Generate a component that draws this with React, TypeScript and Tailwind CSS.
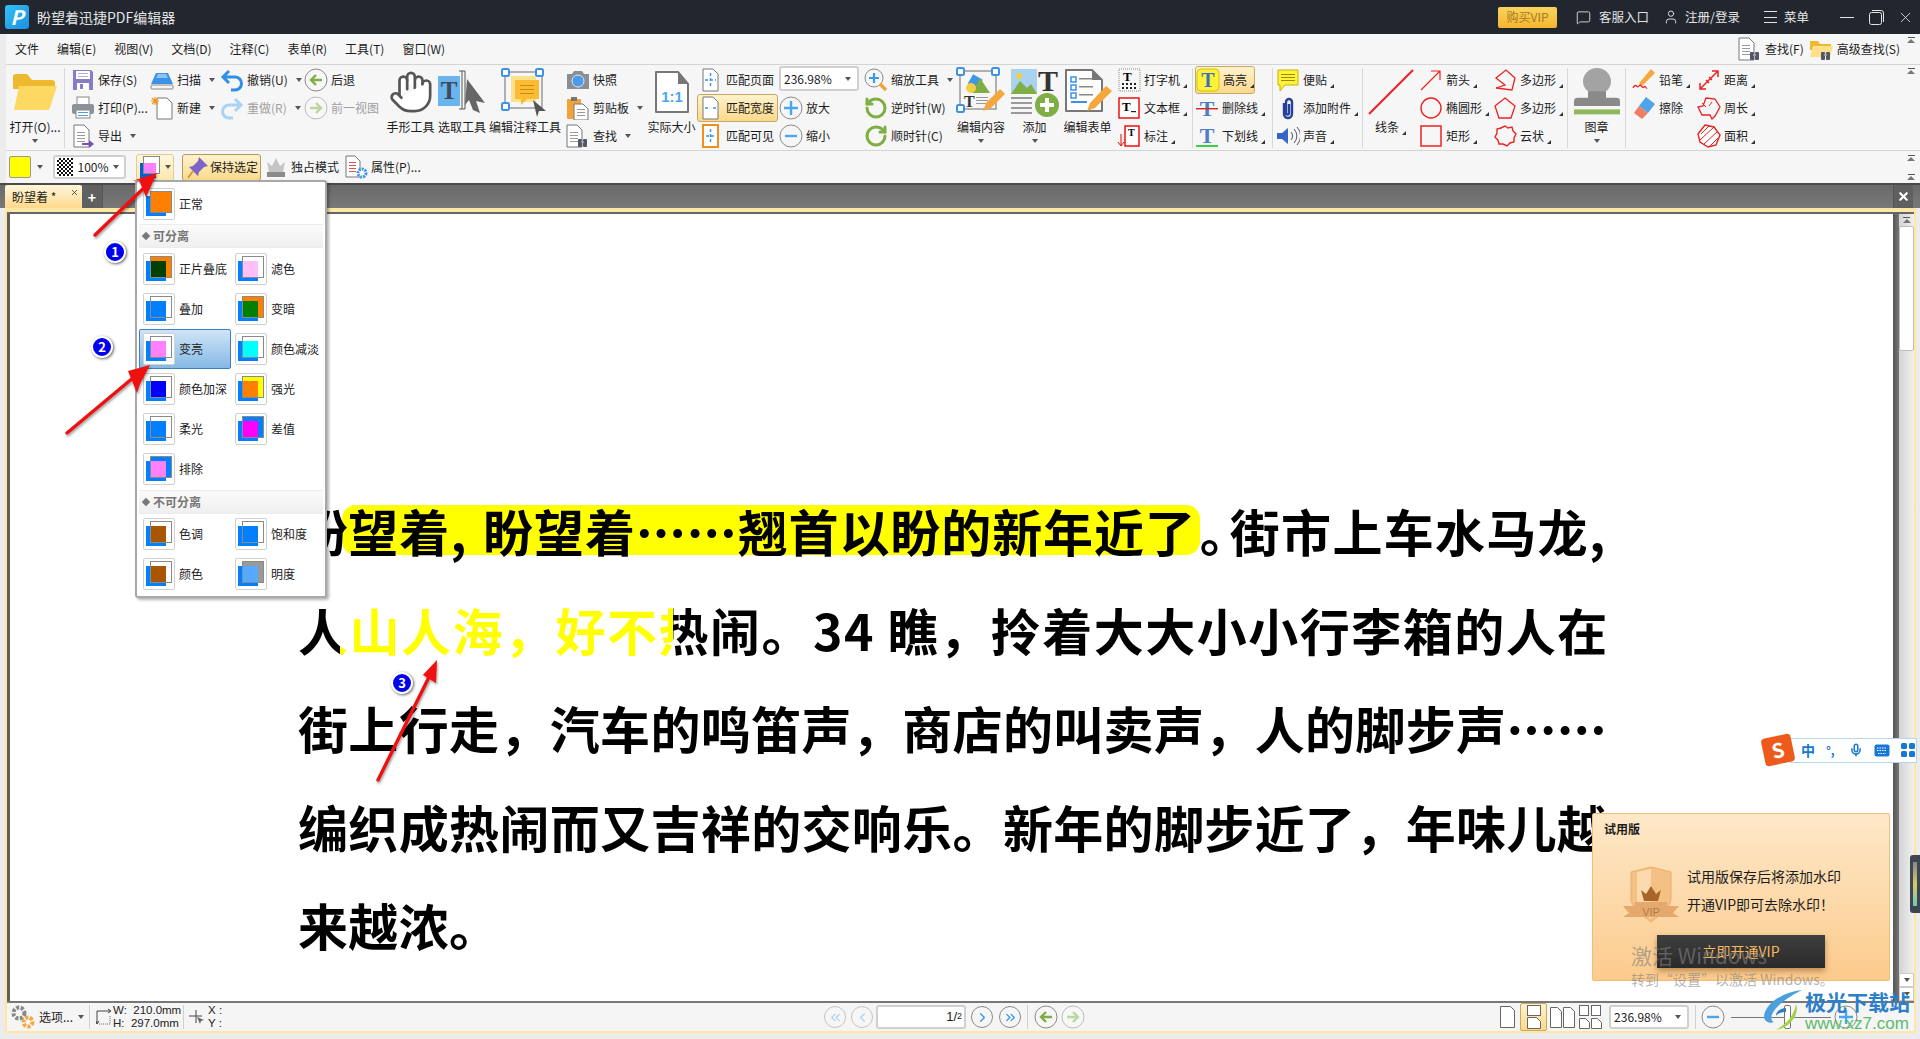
import React from "react";
import clsx from "clsx";
import {
  ChevronLeft,
  ChevronRight,
  ChevronsLeft,
  ChevronsRight,
  Hand,
  MessageSquare,
  Mic,
  RotateCcw,
  RotateCw,
  User,
  X,
} from "lucide-react";

const S = ({ s = 24, v = 24, children }: { s?: number; v?: number; children: React.ReactNode }) => (
  <svg width={s} height={s} viewBox={`0 0 ${v} ${v}`}>
    {children}
  </svg>
);

const Doc = ({ x = 5, y = 2, w = 14, h = 20, stroke = "#777", fill = "#fff" }) => (
  <path
    d={`M${x} ${y}h${w - 5}l5 5v${h - 5}h-${w}z`}
    fill={fill}
    stroke={stroke}
    strokeWidth="1"
    strokeLinejoin="round"
  />
);

const Binoculars = ({ x = 13, y = 15 }) => (
  <g fill="#556">
    <rect x={x} y={y} width="4" height="8" rx="1" />
    <rect x={x + 5} y={y} width="4" height="8" rx="1" />
    <rect x={x + 3} y={y + 2} width="3" height="2" fill="#8fa0b0" />
  </g>
);

const lines = (x: number, y: number, w: number, n: number, c = "#999", step = 3) =>
  Array.from({ length: n }).map((_, i) => (
    <rect key={i} x={x} y={y + i * step} width={w} height="1" fill={c} />
  ));

const Ic = {
  save: (
    <S>
      <path d="M2 2h18l2 2v18H2z" fill="#8a7cc4" />
      <rect x="5" y="3" width="14" height="8" fill="#fff" />
      {lines(7, 5, 10, 2, "#b5abdc")}
      <rect x="6" y="15" width="12" height="7" fill="#fff" />
      <rect x="9" y="16" width="3" height="5" fill="#8a7cc4" />
    </S>
  ),
  print: (
    <S>
      <rect x="6" y="1" width="12" height="8" fill="#fff" stroke="#888" />
      <rect x="1" y="8" width="22" height="10" rx="2" fill="#8c9299" />
      <rect x="5" y="14" width="14" height="8" fill="#fff" stroke="#888" />
      {lines(7, 16, 10, 2, "#5b9bd5")}
    </S>
  ),
  exportDoc: (
    <S>
      <Doc x={3} y={1} w={15} h={22} />
      {lines(6, 8, 8, 4)}
      <path d="M11 19h7v-3l5 4-5 4v-3h-7z" fill="#7a4fb5" />
    </S>
  ),
  scan: (
    <S>
      <path d="M6 5h12l5 11H1z" fill="#3a93e6" />
      <path d="M8 6h8l2 4H6z" fill="#8cc4f4" />
      <rect x="1" y="17" width="22" height="4" rx="1" fill="#f4f4f4" stroke="#888" />
    </S>
  ),
  create: (
    <S>
      <Doc x={7} y={2} w={15} h={21} />
      <path
        d="M5 1v8M1 5h8M2 2l6 6M8 2L2 8"
        stroke="#f39a1e"
        strokeWidth="1.2"
      />
    </S>
  ),
  undo: (
    <S>
      <path d="M9 3L3 9l6 6M3 9h12a6 6 0 0 1 0 13h-4" fill="none" stroke="#2f8fe6" strokeWidth="3" />
    </S>
  ),
  redo: (
    <S>
      <path d="M15 3l6 6-6 6M21 9H9a6 6 0 0 0 0 13h4" fill="none" stroke="#a9d3f5" strokeWidth="3" />
    </S>
  ),
  back: (
    <S>
      <circle cx="12" cy="12" r="11" fill="#f7f7f7" stroke="#8a8a8a" />
      <path d="M18 12H7M12 7l-5 5 5 5" fill="none" stroke="#7fae45" strokeWidth="2.4" />
    </S>
  ),
  forward: (
    <S>
      <circle cx="12" cy="12" r="11" fill="#f7f7f7" stroke="#bcbcbc" />
      <path d="M6 12h11M12 7l5 5-5 5" fill="none" stroke="#bcd6a0" strokeWidth="2.4" />
    </S>
  ),
  snapshot: (
    <S>
      <path d="M1 6h5l2-3h8l2 3h5v15H1z" fill="#8b8f94" />
      <circle cx="12" cy="13" r="6" fill="#4c9be8" stroke="#dfe6ee" />
    </S>
  ),
  clipboard: (
    <S>
      <rect x="1" y="3" width="14" height="20" rx="1" fill="#f2a33a" />
      <rect x="5" y="1" width="6" height="4" fill="#777" />
      <Doc x={8} y={8} w={14} h={16} />
      {lines(11, 13, 8, 3)}
    </S>
  ),
  find: (
    <S>
      <Doc x={1} y={1} w={15} h={22} />
      {lines(4, 8, 8, 4)}
      <Binoculars x={12} y={15} />
    </S>
  ),
  findFolder: (
    <S>
      <path d="M0 4h8l2 3h11v6H0z" fill="#eeb92f" />
      <path d="M0 20l3-11h20l-3 11z" fill="#fde18a" />
      <Binoculars x={11} y={15} />
    </S>
  ),
  fitPage: (
    <S>
      <Doc x={4} y={1} w={15} h={22} />
      <path d="M11.5 5v14M6 12h11" stroke="#3a93e6" strokeDasharray="3 2" strokeWidth="1.5" />
    </S>
  ),
  fitWidth: (
    <S>
      <Doc x={4} y={1} w={15} h={22} />
      <path d="M6 12h3M14 12h3" stroke="#3a93e6" strokeWidth="1.5" />
    </S>
  ),
  fitVisible: (
    <S>
      <rect x="4" y="1" width="15" height="22" fill="#fff" stroke="#ef8f1c" strokeWidth="2" />
      <path d="M11.5 5v14M7 12h9" stroke="#3a93e6" strokeDasharray="3 2" strokeWidth="1.5" />
    </S>
  ),
  plus: (
    <S>
      <circle cx="12" cy="12" r="11" fill="#f6f6f6" stroke="#8a8a8a" />
      <path d="M12 5v14M5 12h14" stroke="#4aa6ee" strokeWidth="2.4" />
    </S>
  ),
  minus: (
    <S>
      <circle cx="12" cy="12" r="11" fill="#f6f6f6" stroke="#8a8a8a" />
      <path d="M6 12h12" stroke="#4aa6ee" strokeWidth="2.4" />
    </S>
  ),
  zoom: (
    <S>
      <circle cx="10" cy="10" r="9" fill="#f6f6f6" stroke="#8a8a8a" />
      <path d="M10 5v10M5 10h10" stroke="#3a9bea" strokeWidth="2.2" />
      <path d="M16 16l6 6" stroke="#f2a33a" strokeWidth="3.4" />
    </S>
  ),
  typewriter: (
    <S>
      <rect x="2" y="1" width="21" height="22" fill="none" stroke="#888" strokeDasharray="1 1" />
      <text x="6" y="13" fontSize="13" fontWeight="700" fontFamily="Liberation Serif">
        T
      </text>
      <g fill="#222">
        {[5, 9, 13, 17].map((x) => (
          <React.Fragment key={x}>
            <rect x={x} y="15" width="2" height="2" />
            <rect x={x} y="19" width="2" height="2" />
          </React.Fragment>
        ))}
      </g>
    </S>
  ),
  textbox: (
    <S>
      <rect x="2" y="2" width="20" height="20" fill="#fff" stroke="#e00" strokeWidth="1.4" />
      <text x="5" y="15" fontSize="13" fontWeight="700" fontFamily="Liberation Serif">
        T
      </text>
      <rect x="14" y="15" width="5" height="1.2" fill="#222" />
    </S>
  ),
  callout: (
    <S>
      <rect x="8" y="2" width="14" height="20" fill="#fff" stroke="#e00" strokeWidth="1.4" />
      <text x="11" y="12" fontSize="10" fontWeight="700" fontFamily="Liberation Serif">
        T
      </text>
      <path d="M4 10v11M1 18l3 4 3-4" fill="none" stroke="#e00" />
    </S>
  ),
  highlight: (
    <S>
      <rect x="1" y="1" width="22" height="22" rx="4" fill="#fff23a" stroke="#d6c200" />
      <text x="12" y="19" textAnchor="middle" fontSize="20" fontWeight="700" fill="#3d6fc0" fontFamily="Liberation Serif">
        T
      </text>
    </S>
  ),
  strike: (
    <S>
      <text x="12" y="20" textAnchor="middle" fontSize="22" fontWeight="700" fill="#4f7ec4" fontFamily="Liberation Serif">
        T
      </text>
      <rect x="1" y="12" width="22" height="1.4" fill="#d22" />
    </S>
  ),
  underline: (
    <S>
      <text x="12" y="19" textAnchor="middle" fontSize="22" fontWeight="700" fill="#4f7ec4" fontFamily="Liberation Serif">
        T
      </text>
      <rect x="1" y="21" width="22" height="2" fill="#3ecf3e" />
    </S>
  ),
  note: (
    <S>
      <path d="M2 2h20v15H9l-5 6v-6H2z" fill="#fff23a" stroke="#c5b400" />
      {lines(5, 6, 14, 3, "#9a8a00")}
    </S>
  ),
  clip: (
    <S>
      <path
        d="M8 7v11a4 4 0 0 0 8 0V6a3 3 0 0 0-6 0v11a1.5 1.5 0 0 0 3 0V8"
        fill="none"
        stroke="#27409a"
        strokeWidth="2.4"
      />
    </S>
  ),
  sound: (
    <S>
      <path d="M1 9h5l6-5v16l-6-5H1z" fill="#3565c5" />
      <path d="M15 8a6 6 0 0 1 0 8M18 5a10 10 0 0 1 0 14M21 3a13 13 0 0 1 0 18" fill="none" stroke="#556" />
    </S>
  ),
  arrow: (
    <S>
      <path d="M2 22L21 3M12 3h9v9" fill="none" stroke="#ee2222" strokeWidth="1.2" />
    </S>
  ),
  ellipse: (
    <S>
      <circle cx="12" cy="12" r="10" fill="none" stroke="#ee2222" strokeWidth="1.4" />
    </S>
  ),
  rect: (
    <S>
      <rect x="2" y="2" width="20" height="20" fill="none" stroke="#ee2222" strokeWidth="1.5" />
    </S>
  ),
  polyline: (
    <S>
      <path d="M3 10L13 2l9 8-3 12-16-2 9-3z" fill="none" stroke="#ee2222" strokeWidth="1.3" />
    </S>
  ),
  polygon: (
    <S>
      <path d="M12 2l10 8-4 12H6L2 10z" fill="none" stroke="#ee2222" strokeWidth="1.3" />
    </S>
  ),
  cloud: (
    <S>
      <path
        d="M12 2l3 2 4-1 1 4 3 3-2 4 0 4-4 1-3 3-4-2-4 0-1-4-3-3 2-4 0-4 4-1z"
        fill="none"
        stroke="#ee2222"
        strokeWidth="1.4"
      />
    </S>
  ),
  pencil: (
    <S>
      <path d="M8 14L19 1l4 4-12 12-4 1z" fill="#f4a73c" />
      <path d="M1 20c3-6 4 1 6-2s3 3 5 1 2 2 3 1" fill="none" stroke="#ee2222" strokeWidth="1.3" />
    </S>
  ),
  eraser: (
    <S>
      <path d="M14 1l9 7-7 9-9-7z" fill="#4ea3ea" />
      <path d="M7 10l9 7-6 6-8-6z" fill="#ef7f62" />
    </S>
  ),
  distance: (
    <S>
      <path d="M3 21L21 3M15 3h6v6M3 15v6h6M9 12l3 3M12 9l3 3" fill="none" stroke="#e92222" strokeWidth="1.5" />
    </S>
  ),
  perimeter: (
    <S>
      <path d="M9 2l9 1 5 8-5 9-3 3-2-4H5L1 11l5-1z" fill="none" stroke="#e92222" strokeWidth="1.3" />
      <path d="M5 7l4 4M15 6l-3 4" stroke="#e92222" />
    </S>
  ),
  area: (
    <S>
      <path d="M8 1l9 2 6 8-4 10-8 2-8-5-2-8z" fill="#fff" stroke="#e92222" strokeWidth="1.4" />
      <path d="M4 10l8-8M3 16L17 3M7 20L21 7M13 22l8-8" stroke="#e92222" />
    </S>
  ),
  pin: (
    <S>
      <path d="M13 2l9 9-4 1-5 5-1 4-9-9 4-1 5-5z" fill="#7e63c8" />
      <path d="M7 16l-5 7" stroke="#d49a3a" strokeWidth="2" />
    </S>
  ),
  crown: (
    <S>
      <path d="M3 7l5 4 4-8 4 8 5-4-2 10H5z" fill="#c5c5c5" />
      <rect x="3" y="17" width="18" height="5" fill="#8a8a8a" />
    </S>
  ),
  props: (
    <S>
      <Doc x={2} y={1} w={14} h={21} />
      {lines(5, 7, 7, 4, "#d9534f")}
      <circle cx="18" cy="18" r="4" fill="#fff" stroke="#3a93e6" strokeWidth="3" strokeDasharray="2 1" />
    </S>
  ),
};

const Folder = () => (
  <svg width="48" height="38" viewBox="0 0 48 38">
    <path d="M2 4a3 3 0 0 1 3-3h11l5 6h20a3 3 0 0 1 3 3v6H2v20z" fill="#eeb92f" />
    <path d="M8 13h38l-7 22a3 3 0 0 1-3 2H3z" fill="#fdd963" />
  </svg>
);

const HandTool = () => <Hand size={46} strokeWidth={1.4} color="#555" fill="#fff" />;

const SelectTool = () => (
  <svg width="50" height="50" viewBox="0 0 50 50">
    <rect x="1" y="9" width="22" height="30" fill="#6ab4f0" />
    <text x="12" y="32" textAnchor="middle" fontSize="25" fontWeight="700" fill="#3f4a57" fontFamily="Liberation Serif">
      T
    </text>
    <path d="M22 4h6v38h-6M25 4v38" fill="none" stroke="#555" />
    <path d="M30 12l18 24-9-2 4 12-7-3-4-10-4 5z" fill="#666" />
  </svg>
);

const AnnotTool = () => (
  <svg width="50" height="50" viewBox="0 0 50 50">
    <rect x="5" y="5" width="37" height="36" fill="none" stroke="#999" strokeWidth="1.5" />
    {[[2, 2], [36, 2], [2, 36]].map(([x, y]) => (
      <rect key={x + "" + y} x={x} y={y} width="7" height="7" rx="1.5" fill="#fff" stroke="#3a93e6" strokeWidth="2" />
    ))}
    <rect x="11" y="9" width="25" height="26" fill="#fbe08d" />
    <path d="M15 13h24v19H27l-6 6v-6h-6z" fill="#fbbc33" />
    {lines(20, 18, 14, 3, "#c98c13", 4)}
    <path d="M33 33l13 11-7 0-2 6z" fill="#555" />
  </svg>
);

const ActualSize = () => (
  <svg width="36" height="44" viewBox="0 0 36 44">
    <path d="M2 2h22l10 12v28H2z" fill="#fff" stroke="#777" strokeWidth="2" strokeLinejoin="round" />
    <path d="M24 2l10 12H24z" fill="#777" />
    <text x="18" y="32" textAnchor="middle" fontSize="15" fontWeight="700" fill="#4aa6ee" fontFamily="Liberation Sans">
      1:1
    </text>
  </svg>
);

const EditContent = () => (
  <svg width="50" height="50" viewBox="0 0 50 50">
    <rect x="4" y="4" width="36" height="38" fill="none" stroke="#999" strokeWidth="1.5" />
    {[[1, 1], [36, 1], [1, 38]].map(([x, y]) => (
      <rect key={x + "" + y} x={x} y={y} width="7" height="7" rx="1.5" fill="#fff" stroke="#3a93e6" strokeWidth="2" />
    ))}
    <rect x="14" y="9" width="11" height="11" fill="#3d96e8" transform="rotate(30 19 14)" />
    <path d="M24 11l10 15H16z" fill="#7fae45" />
    <circle cx="15" cy="21" r="5" fill="#f5ce45" />
    <text x="8" y="40" fontSize="16" fontWeight="700" fill="#333" fontFamily="Liberation Serif">
      T
    </text>
    {lines(20, 30, 12, 3, "#999")}
    <path d="M27 44l3-8 14-14 5 5-14 14z" fill="#f4a73c" />
  </svg>
);

const AddTool = () => (
  <svg width="50" height="50" viewBox="0 0 50 50">
    <rect x="1" y="2" width="26" height="25" fill="#a9d2ee" />
    <path d="M1 27l9-13 7 7 4-4 6 10H1z" fill="#7fae45" />
    <circle cx="9" cy="9" r="3" fill="#f5ce45" />
    <text x="38" y="24" textAnchor="middle" fontSize="30" fontWeight="700" fill="#333" fontFamily="Liberation Serif">
      T
    </text>
    {[30, 35, 40, 45].map((y) => (
      <rect key={y} x="1" y={y} width="21" height="2" fill="#999" />
    ))}
    <circle cx="37" cy="38" r="12" fill="#7fae45" />
    <path d="M37 31v14M30 38h14" stroke="#fff" strokeWidth="4" />
  </svg>
);

const EditForm = () => (
  <svg width="50" height="50" viewBox="0 0 50 50">
    <path d="M3 3h26l10 10v31H3z" fill="#fff" stroke="#777" strokeWidth="2" strokeLinejoin="round" />
    <path d="M29 3l10 10H29z" fill="#777" />
    {[10, 18, 26].map((y) => (
      <React.Fragment key={y}>
        <rect x="8" y={y} width="5" height="5" fill="none" stroke="#3a93e6" strokeWidth="1.5" />
        <rect x="16" y={y + 1} width="14" height="1.5" fill="#888" />
      </React.Fragment>
    ))}
    <rect x="8" y="34" width="16" height="2" fill="#3a93e6" />
    <path d="M24 44l3-8 16-17 6 5-17 17z" fill="#f4a73c" />
  </svg>
);

const LineTool = () => (
  <svg width="46" height="46" viewBox="0 0 46 46">
    <path d="M1 45L45 1" stroke="#ee2020" strokeWidth="2" />
  </svg>
);

const Stamp = () => (
  <svg width="46" height="48" viewBox="0 0 46 58" preserveAspectRatio="none">
    <ellipse cx="23" cy="16" rx="14" ry="16" fill="#a3a3a3" />
    <path d="M14 28h18v8h10a4 4 0 0 1 4 4v6H0v-6a4 4 0 0 1 4-4h10z" fill="#8a8a8a" />
    <rect y="50" width="46" height="6" fill="#8fb85a" />
  </svg>
);

const Caret = ({ className }: { className?: string }) => (
  <span
    className={clsx(
      "inline-block border-x-[3.5px] border-t-[4px] border-x-transparent border-t-[#555]",
      className
    )}
  />
);

const Corner = () => (
  <span className="mb-[-12px] ml-[3px] inline-block border-b-[4px] border-l-[4px] border-b-[#333] border-l-transparent" />
);

type ToolProps = {
  icon: React.ReactNode;
  label: string;
  corner?: boolean;
  caret?: boolean;
  dim?: boolean;
  className?: string;
};

const Tool = ({ icon, label, corner, caret, dim, className }: ToolProps) => (
  <div className={clsx("flex h-7 items-center whitespace-nowrap", className)}>
    <span className="flex w-6 shrink-0 items-center justify-center">{icon}</span>
    <span className={clsx("ml-[3px]", dim && "text-[#a0a0a0]")}>{label}</span>
    {corner && <Corner />}
    {caret && <Caret className="ml-2" />}
  </div>
);

const Big = ({
  icon,
  label,
  caret,
  corner,
  className,
}: {
  icon: React.ReactNode;
  label: string;
  caret?: boolean;
  corner?: boolean;
  className?: string;
}) => (
  <div className={clsx("flex shrink-0 flex-col items-center", className)}>
    <div className="flex h-[52px] items-center justify-center">{icon}</div>
    <div className="flex h-[18px] items-center whitespace-nowrap">
      {label}
      {corner && <Corner />}
    </div>
    {caret && <Caret className="mt-[3px]" />}
  </div>
);

const Sep = () => <div className="mt-[2px] h-[80px] w-px shrink-0 bg-[#d8d8d8]" />;

const ScrollUp = () => (
  <span className="flex flex-col items-center">
    <span className="h-px w-[7px] bg-[#555]" />
    <span className="mt-px border-x-[4px] border-b-[4px] border-x-transparent border-b-[#777]" />
  </span>
);

type BlendProps = { top?: string; mid: string };

const BlendIcon = ({ top = "none", mid }: BlendProps) => (
  <span className="flex h-8 w-8 shrink-0 items-center justify-center rounded-[2px] border border-[#d0d0d0] bg-white">
    <svg width="30" height="30" viewBox="0 0 30 30">
      <rect x="2" y="7" width="20" height="20" fill="#0080ff" />
      <rect x="6.5" y="2.5" width="21" height="21" fill={top} stroke="#8a8a8a" />
      <rect x="7" y="7" width="15" height="16" fill={mid} />
    </svg>
  </span>
);

const BlendItem = ({
  label,
  top,
  mid,
  active,
  className,
}: BlendProps & { label: string; active?: boolean; className?: string }) => (
  <div
    className={clsx(
      "flex items-center gap-1 whitespace-nowrap pl-1",
      active && "rounded-[2px] border border-[#3d80c0] bg-gradient-to-b from-[#cfe4f7] to-[#86b9e6] pl-[3px]",
      className
    )}
  >
    <BlendIcon top={top} mid={mid} />
    <span>{label}</span>
  </div>
);

const BlendHeader = ({ label }: { label: string }) => (
  <div className="flex h-6 items-center gap-1 border-y border-[#ececec] bg-gradient-to-b from-[#fafafa] to-[#efefef] pl-[3px] font-bold text-[#777]">
    <span className="ml-[1px] h-[6px] w-[6px] rotate-45 bg-[#777]" />
    <span>{label}</span>
  </div>
);

const blendRows: { label: string; top?: string; mid: string; active?: boolean }[][] = [
  [
    { label: "正片叠底", top: "#ff8000", mid: "#004000" },
    { label: "滤色", mid: "#ffc0fa" },
  ],
  [
    { label: "叠加", mid: "#0080ff" },
    { label: "变暗", top: "#ff8000", mid: "#008000" },
  ],
  [
    { label: "变亮", mid: "#ff80ff", active: true },
    { label: "颜色减淡", mid: "#00ffff" },
  ],
  [
    { label: "颜色加深", mid: "#0000ff" },
    { label: "强光", top: "#ffff00", mid: "#ff8000" },
  ],
  [
    { label: "柔光", mid: "#0080ff" },
    { label: "差值", top: "#0080ff", mid: "#ff00ff" },
  ],
  [{ label: "排除", top: "#0080ff", mid: "#ff80ff" }],
];

const blendRows2: { label: string; top?: string; mid: string }[][] = [
  [
    { label: "色调", mid: "#aa5500" },
    { label: "饱和度", mid: "#0080ff" },
  ],
  [
    { label: "颜色", mid: "#aa5500" },
    { label: "明度", top: "#999999", mid: "#55aaff" },
  ],
];

const BlendRow = ({ items }: { items: { label: string; top?: string; mid: string; active?: boolean }[] }) => (
  <div className="flex">
    {items.map((item) => (
      <BlendItem key={item.label} {...item} className="h-10 w-[92px] shrink-0" />
    ))}
  </div>
);

const BlendMenu = () => (
  <div className="absolute left-[135px] top-[180px] w-[192px] rounded-[3px] border-2 border-[#a8a8a8] bg-white p-[2px] pt-[6px] text-[#222] shadow-[2px_2px_3px_rgba(0,0,0,0.3)]">
    <BlendItem label="正常" top="#ff8000" mid="#ff8000" className="mb-1 h-8" />
    <BlendHeader label="可分离" />
    <div className="flex flex-col pb-[1px] pt-[1px]">
      {blendRows.map((items, i) => (
        <BlendRow key={i} items={items} />
      ))}
    </div>
    <BlendHeader label="不可分离" />
    <div className="flex flex-col">
      {blendRows2.map((items, i) => (
        <BlendRow key={i} items={items} />
      ))}
    </div>
  </div>
);

const Badge = ({ n, className }: { n: number; className: string }) => (
  <div
    className={clsx(
      "absolute flex h-[22px] w-[22px] items-center justify-center rounded-full border-2 border-white bg-[#0000ee] text-[13px] font-bold text-white shadow-[1px_1px_3px_rgba(0,0,0,0.6)]",
      className
    )}
  >
    {n}
  </div>
);

const RedArrow = ({ d, head }: { d: string; head: string }) => (
  <g>
    <path d={d} stroke="#f01010" strokeWidth="3.4" strokeLinecap="round" />
    <polygon points={head} fill="#f01010" />
  </g>
);

const Arrows = () => (
  <svg
    className="pointer-events-none absolute left-0 top-0 drop-shadow-[1px_2px_1px_rgba(0,0,0,0.35)]"
    width="520"
    height="800"
    viewBox="0 0 520 800"
  >
    <RedArrow d="M95 235L150 182" head="157,173 146,197 139,180 132,181" />
    <RedArrow d="M67 433L140 372" head="150,365 140,384 137,393 128,371" />
    <RedArrow d="M378 780L430 675" head="437,660 436,683 423,675 420,678" />
  </svg>
);

const ImeBar = () => (
  <div className="absolute left-[1763px] top-[735px] flex h-[30px] items-center">
    <div className="z-10 flex h-[28px] w-[30px] rotate-[-12deg] items-center justify-center rounded-[4px] bg-[#ee5a1c] text-[20px] font-bold text-white">
      S
    </div>
    <div className="-ml-[3px] flex h-[25px] w-[127px] items-center gap-[11px] border border-[#b9d4ee] bg-white pl-[10px] text-[#1678d9]">
      <span className="text-[14px] font-bold">中</span>
      <span className="w-[12px] text-[12px] font-bold leading-none">°,</span>
      <Mic size={14} strokeWidth={2.6} />
      <svg width="16" height="13" viewBox="0 0 16 13">
        <rect x="0.5" y="0.5" width="15" height="12" rx="2" fill="#1678d9" />
        <path d="M3 4h10M3 6.500h10M4 9.500h8" stroke="#fff" strokeDasharray="1.500 1" />
      </svg>
      <svg width="14" height="14" viewBox="0 0 14 14" fill="#1678d9">
        <rect width="6" height="6" rx="1.500" />
        <rect x="8" width="6" height="6" rx="1.500" />
        <rect y="8" width="6" height="6" rx="1.500" />
        <rect x="8" y="8" width="6" height="6" rx="1.500" />
      </svg>
    </div>
  </div>
);

const VipPopup = () => (
  <div className="absolute left-[1592px] top-[813px] flex h-[168px] w-[298px] flex-col rounded-[2px] border border-[#f0bd78] bg-gradient-to-b from-[#fde8c8] to-[#fccb8c] text-[#1c1c1c]">
    <div className="pl-[11px] pt-[6px] text-[12px] font-bold">试用版</div>
    <div className="mt-[24px] flex pl-[30px]">
      <svg width="56" height="58" viewBox="0 0 56 58" className="mt-[4px] shrink-0">
        <path d="M28 1l20 5v26c0 10-10 16-20 24C18 48 8 42 8 32V6z" fill="#f4c084" stroke="#e9ad6c" />
        <path d="M14 6l14-3v50C18 46 14 40 14 32z" fill="#fad9ae" />
        <path d="M18 24l5 4 5-8 5 8 5-4-3 11H21z" fill="#a8652a" />
        <path d="M0 40h12v-4h32v4h12l-6 7 6 4H0l6-4z" fill="#e6a96d" />
        <text x="28" y="50" textAnchor="middle" fontSize="11" fill="#b07a48" fontFamily="Liberation Sans">
          VIP
        </text>
      </svg>
      <div className="ml-[8px] text-[14px] leading-[28px]">
        <div>试用版保存后将添加水印</div>
        <div>开通VIP即可去除水印！</div>
      </div>
    </div>
    <div className="ml-[64px] mt-[11px] flex h-[33px] w-[168px] items-center justify-center bg-gradient-to-b from-[#3f3f3f] to-[#2a2a2a] text-[14px] text-[#f5b862] shadow-[0_3px_6px_rgba(120,70,20,0.5)]">
      立即开通VIP
    </div>
  </div>
);

const ActivationMark = () => (
  <div className="pointer-events-none absolute left-[1631px] top-[942px] text-[#808080]/60">
    <div className="whitespace-nowrap text-[21px] leading-[26px]">激活 Windows</div>
    <div className="whitespace-nowrap text-[14px] leading-[22px]">转到“设置”以激活 Windows。</div>
  </div>
);

const SiteMark = () => (
  <div className="pointer-events-none absolute left-[1762px] top-[988px] flex">
    <svg width="42" height="44" viewBox="0 0 42 44">
      <path d="M40 2C22 4 4 14 2 28c0 6 6 8 10 6C6 32 8 18 40 2z" fill="#4a9fdc" />
      <path d="M34 16c4 10-6 24-20 26 10-6 18-14 20-26z" fill="#a7d048" />
      <path d="M24 20c-6 0-10 4-10 8 2-3 6-4 10-4z" fill="#2e7fc4" />
    </svg>
    <div className="ml-[1px] flex flex-col">
      <span className="whitespace-nowrap text-[21px] font-bold leading-[26px] text-[#2c7fc8]">极光下载站</span>
      <span className="mt-[1px] whitespace-nowrap font-['Liberation_Sans',sans-serif] text-[17px] leading-[18px] text-[#5dbb6a]">
        www.xz7.com
      </span>
    </div>
  </div>
);

const NavBtn = ({ children, dim }: { children: React.ReactNode; dim?: boolean }) => (
  <span
    className={clsx(
      "flex h-[22px] w-[22px] shrink-0 items-center justify-center rounded-full border bg-[#f6f6f6]",
      dim ? "border-[#c4c4c4] text-[#a9d3f5]" : "border-[#8a8a8a] text-[#2f96ee]"
    )}
  >
    {children}
  </span>
);

const PageIcon = ({ x = 0, y = 0, w = 12, h = 20 }) => (
  <path d={`M${x + 0.5} ${y + 0.5}h${w - 4}l4 4v${h - 4}h-${w}z`} fill="#fff" stroke="#666" />
);

const Combo = ({ text, className }: { text: string; className: string }) => (
  <div
    className={clsx(
      "flex items-center justify-between rounded-[3px] border-2 border-[#d0d0d0] bg-white pl-[3px] pr-[6px]",
      className
    )}
  >
    <span>{text}</span>
    <Caret />
  </div>
);

const MenuBar = () => (
  <div className="flex h-[31px] items-center border-b border-[#d4d4d4] pl-[9px]">
    <div className="flex gap-[18px]">
      {["文件", "编辑(E)", "视图(V)", "文档(D)", "注释(C)", "表单(R)", "工具(T)", "窗口(W)"].map((m) => (
        <span key={m} className="whitespace-nowrap">
          {m}
        </span>
      ))}
    </div>
    <div className="ml-auto flex items-center pr-[20px]">
      <Tool icon={Ic.find} label="查找(F)" />
      <Tool icon={Ic.findFolder} label="高级查找(S)" className="ml-[6px]" />
    </div>
  </div>
);

const Ribbon = () => (
  <div className="flex h-[86px] border-b border-[#d4d4d4] pt-px">
    <Big className="w-[58px]" icon={<Folder />} label="打开(O)..." caret />
    <Sep />
    <div className="w-[83px] shrink-0 pl-[6px]">
      <Tool icon={Ic.save} label="保存(S)" />
      <Tool icon={Ic.print} label="打印(P)..." />
      <Tool icon={Ic.exportDoc} label="导出" caret />
    </div>
    <div className="w-[70px] shrink-0 pl-[2px]">
      <Tool icon={Ic.scan} label="扫描" caret />
      <Tool icon={Ic.create} label="新建" caret />
    </div>
    <div className="w-[84px] shrink-0 pl-[2px]">
      <Tool icon={Ic.undo} label="撤销(U)" caret />
      <Tool icon={Ic.redo} label="重做(R)" caret dim />
    </div>
    <div className="w-[82px] shrink-0 pl-[2px]">
      <Tool icon={Ic.back} label="后退" />
      <Tool icon={Ic.forward} label="前一视图" dim />
    </div>
    <Big className="w-[53px]" icon={<HandTool />} label="手形工具" />
    <Big className="w-[50px]" icon={<SelectTool />} label="选取工具" />
    <Big className="w-[76px]" icon={<AnnotTool />} label="编辑注释工具" />
    <div className="w-[83px] shrink-0 pl-[3px]">
      <Tool icon={Ic.snapshot} label="快照" />
      <Tool icon={Ic.clipboard} label="剪贴板" caret />
      <Tool icon={Ic.find} label="查找" caret />
    </div>
    <Big className="w-[51px]" icon={<ActualSize />} label="实际大小" />
    <div className="w-[81px] shrink-0">
      <Tool icon={Ic.fitPage} label="匹配页面" className="pl-[2px]" />
      <Tool
        icon={Ic.fitWidth}
        label="匹配宽度"
        className="rounded-[3px] border border-[#c8a868] bg-gradient-to-b from-[#fff2cc] to-[#fbd98a] pl-px"
      />
      <Tool icon={Ic.fitVisible} label="匹配可见" className="pl-[2px]" />
    </div>
    <div className="w-[84px] shrink-0 pl-px">
      <Combo text="236.98%" className="mb-[3px] mr-[3px] h-[25px]" />
      <Tool icon={Ic.plus} label="放大" />
      <Tool icon={Ic.minus} label="缩小" />
    </div>
    <div className="w-[92px] shrink-0 pl-[2px]">
      <Tool icon={Ic.zoom} label="缩放工具" caret />
      <Tool icon={<RotateCcw size={24} strokeWidth={3} color="#7fae45" />} label="逆时针(W)" />
      <Tool icon={<RotateCw size={24} strokeWidth={3} color="#7fae45" />} label="顺时针(C)" />
    </div>
    <Big className="w-[54px]" icon={<EditContent />} label="编辑内容" caret />
    <Big className="w-[53px]" icon={<AddTool />} label="添加" caret />
    <Big className="w-[53px]" icon={<EditForm />} label="编辑表单" />
    <div className="w-[78px] shrink-0 pl-[3px]">
      <Tool icon={Ic.typewriter} label="打字机" corner />
      <Tool icon={Ic.textbox} label="文本框" corner />
      <Tool icon={Ic.callout} label="标注" corner />
    </div>
    <Sep />
    <div className="w-[79px] shrink-0 pl-[2px]">
      <Tool
        icon={Ic.highlight}
        label="高亮"
        corner
        className="w-[60px] rounded-[3px] border border-[#c8a868] bg-gradient-to-b from-[#fff2cc] to-[#fbd98a]"
      />
      <Tool icon={Ic.strike} label="删除线" corner />
      <Tool icon={Ic.underline} label="下划线" corner />
    </div>
    <Sep />
    <div className="w-[89px] shrink-0 pl-[3px]">
      <Tool icon={Ic.note} label="便贴" corner />
      <Tool icon={Ic.clip} label="添加附件" corner />
      <Tool icon={Ic.sound} label="声音" corner />
    </div>
    <Sep />
    <Big className="w-[55px]" icon={<LineTool />} label="线条" corner />
    <div className="w-[74px] shrink-0 pl-px">
      <Tool icon={Ic.arrow} label="箭头" corner />
      <Tool icon={Ic.ellipse} label="椭圆形" corner />
      <Tool icon={Ic.rect} label="矩形" corner />
    </div>
    <div className="w-[75px] shrink-0 pl-px">
      <Tool icon={Ic.polyline} label="多边形" corner />
      <Tool icon={Ic.polygon} label="多边形" corner />
      <Tool icon={Ic.cloud} label="云状" corner />
    </div>
    <Sep />
    <Big className="w-[57px]" icon={<Stamp />} label="图章" caret />
    <Sep />
    <div className="w-[69px] shrink-0 pl-[6px]">
      <Tool icon={Ic.pencil} label="铅笔" corner />
      <Tool icon={Ic.eraser} label="擦除" />
    </div>
    <div className="w-[83px] shrink-0 pl-[2px]">
      <Tool icon={Ic.distance} label="距离" corner />
      <Tool icon={Ic.perimeter} label="周长" corner />
      <Tool icon={Ic.area} label="面积" corner />
    </div>
  </div>
);

const PropBar = () => (
  <div className="flex h-[32px] items-center pl-[3px]">
    <span className="h-[22px] w-[22px] shrink-0 rounded-[2px] border border-[#999] bg-[#ffff00]" />
    <Caret className="ml-[6px]" />
    <div className="ml-[10px] flex h-[24px] w-[73px] shrink-0 items-center justify-between rounded-[3px] border-2 border-[#d0d0d0] bg-white pl-[2px] pr-[5px]">
      <span className="h-[18px] w-[16px] shrink-0 bg-[repeating-conic-gradient(#111_0_25%,#fff_0_50%)] bg-[length:4px_4px]" />
      <span>100%</span>
      <Caret />
    </div>
    <div className="ml-[10px] flex h-[27px] w-[38px] shrink-0 items-center gap-[4px] rounded-[3px] border border-[#e4cc90] bg-gradient-to-b from-[#fff6dc] to-[#fde8ad] pl-[2px]">
      <svg width="22" height="24" viewBox="0 0 22 24">
        <rect x="1" y="8" width="16" height="15" fill="#0060d0" />
        <rect x="4.500" y="1.500" width="16" height="17" fill="#fff" stroke="#888" />
        <rect x="5" y="8" width="12" height="10" fill="#ff80ff" />
      </svg>
      <Caret />
    </div>
    <div className="ml-[8px] flex h-[27px] w-[79px] shrink-0 items-center rounded-[3px] border border-[#b59a5c] bg-gradient-to-b from-[#fff2cc] to-[#fbd98a] pl-[3px]">
      <span className="flex w-6 shrink-0 justify-center">{Ic.pin}</span>
      <span className="whitespace-nowrap text-[12px]">保持选定</span>
    </div>
    <Tool icon={Ic.crown} label="独占模式" className="ml-[3px]" />
    <Tool icon={Ic.props} label="属性(P)..." className="ml-[5px]" />
  </div>
);

const TabBar = () => (
  <div className="flex h-[25px] items-stretch border-t-2 border-[#4a4a4a] bg-gradient-to-b from-[#6a6a6a] to-[#787878] pl-[5px]">
    <div className="relative flex w-[77px] items-center rounded-t-[2px] bg-gradient-to-b from-[#fff6dc] to-[#fdd98a] pl-[7px]">
      <span className="text-[12px]">盼望着 *</span>
      <X size={9} className="absolute right-[3px] top-[3px]" color="#333" strokeWidth={2} />
    </div>
    <div className="flex w-[21px] items-center justify-center border-r border-[#555] bg-[#606060] text-[14px] font-bold leading-none text-white">
      +
    </div>
    <div className="ml-auto mr-[7px] flex w-[20px] items-center justify-center border-l border-[#555] bg-[#606060]">
      <X size={13} color="#fff" strokeWidth={4} />
    </div>
  </div>
);

const DocLine = ({ children, className }: { children: React.ReactNode; className?: string }) => (
  <div
    className={clsx(
      "h-[98.5px] whitespace-nowrap py-[24px] text-[50px] font-bold leading-[50px] text-black",
      className ?? "tracking-[0.35px]"
    )}
  >
    {children}
  </div>
);

const Page = () => (
  <div className="relative flex-1 overflow-hidden bg-white pl-[288px] pt-[267px]">
    <DocLine>
      <span className="relative">盼</span>
      <span className="-ml-[6px] inline-block h-[50px] rounded-[14px] bg-[#ffff00] pl-[6px] pr-[4px] tracking-[0.9px]">
        望着<span className="inline-block w-[33px]">,</span>盼望着<span className="font-black">……</span>翘首以盼的新年近了
      </span>
      <span className="inline-block w-[30px]">。</span>
      <span className="tracking-[1.3px]">街市上车水马龙,</span>
    </DocLine>
    <DocLine className="tracking-[1.5px]">
      <span className="bg-[linear-gradient(90deg,#000_42px,#ff0_42px,#ff0_375px,#000_375px)] bg-clip-text text-transparent">
        人山人海，好不热
      </span>
      闹。34 瞧，拎着大大小小行李箱的人在
    </DocLine>
    <DocLine>
      街上行走，汽车的鸣笛声，商店的叫卖声，人的脚步声<span className="font-black">……</span>
    </DocLine>
    <DocLine>编织成热闹而又吉祥的交响乐。新年的脚步近了，年味儿越</DocLine>
    <DocLine>来越浓。</DocLine>
  </div>
);

const Scroller = () => (
  <div className="flex w-[15px] shrink-0 flex-col bg-gradient-to-r from-[#d4d4d4] to-[#f0f0f0]">
    <div className="flex h-[12px] items-center justify-center">
      <ScrollUp />
    </div>
    <div className="h-[125px] w-full rounded-[2px] border border-[#bdbdbd] bg-white" />
    <div className="mt-auto flex h-[14px] items-center justify-center border border-[#ccc] bg-white">
      <Caret />
    </div>
    <div className="flex h-[14px] items-center justify-center border border-[#ccc] bg-white">
      <Caret />
    </div>
  </div>
);

const StatusBar = () => (
  <div className="flex h-[30px] items-center border-t-2 border-[#777] bg-[#f5f5f5] text-[#222]">
    <svg width="26" height="26" viewBox="0 0 26 26" className="ml-[3px] shrink-0">
      <circle cx="9" cy="9" r="5.500" fill="none" stroke="#888" strokeWidth="4" strokeDasharray="3 1.500" />
      <circle cx="18" cy="18" r="4.500" fill="none" stroke="#f4a73c" strokeWidth="4" strokeDasharray="3 1.500" />
    </svg>
    <span className="ml-[3px] whitespace-nowrap">选项...</span>
    <Caret className="ml-[5px]" />
    <span className="ml-[5px] h-[24px] w-px bg-[#d0d0d0]" />
    <svg width="16" height="18" viewBox="0 0 16 18" className="ml-[6px] shrink-0">
      <path d="M1 16V3h13M12 1l3 2-3 2M1 16l-1-3M1 16l2-3" fill="none" stroke="#444" />
      <path d="M3 16h11v-9" fill="none" stroke="#666" strokeDasharray="1 1" />
    </svg>
    <div className="ml-px w-[70px] shrink-0 font-['Liberation_Sans',sans-serif] text-[11.5px] leading-[13px]">
      <div className="whitespace-nowrap">W:&nbsp; 210.0mm</div>
      <div className="whitespace-nowrap">H:&nbsp; 297.0mm</div>
    </div>
    <span className="h-[24px] w-px bg-[#d0d0d0]" />
    <svg width="16" height="16" viewBox="0 0 16 16" className="ml-[5px] shrink-0">
      <path d="M7 1v13M0 7h13" stroke="#444" />
      <path d="M8 8l7 3-3 1-1 3z" fill="#666" />
    </svg>
    <div className="ml-[3px] font-['Liberation_Sans',sans-serif] text-[11.5px] leading-[13px]">
      <div>X :</div>
      <div>Y :</div>
    </div>
    <div className="ml-[602px] flex items-center">
      <NavBtn dim>
        <ChevronsLeft size={15} />
      </NavBtn>
      <span className="ml-[5px]">
        <NavBtn dim>
          <ChevronLeft size={15} />
        </NavBtn>
      </span>
      <div className="ml-[3px] flex h-[24px] w-[90px] items-center justify-end rounded-[3px] border-2 border-[#d0d0d0] bg-white pr-[2px] font-['Liberation_Sans',sans-serif] text-[13px]">
        1/<span className="text-[9px]">2</span>
      </div>
      <span className="ml-[5px]">
        <NavBtn>
          <ChevronRight size={15} />
        </NavBtn>
      </span>
      <span className="ml-[6px]">
        <NavBtn>
          <ChevronsRight size={15} />
        </NavBtn>
      </span>
      <span className="ml-[6px] h-[24px] w-px bg-[#d0d0d0]" />
      <span className="ml-[6px]">{Ic.back}</span>
      <span className="ml-[3px]">{Ic.forward}</span>
    </div>
    <div className="ml-[413px] flex items-center">
      <svg width="18" height="22" viewBox="0 0 18 22">
        <PageIcon x={2} y={0} w={14} h={21} />
      </svg>
      <div className="ml-[4px] flex h-[28px] w-[27px] items-center justify-center rounded-[2px] border border-[#c8a868] bg-gradient-to-b from-[#fff2cc] to-[#fbd98a]">
        <svg width="16" height="24" viewBox="0 0 16 24">
          <rect x="1.500" y="0.500" width="13" height="10" fill="#fff" stroke="#666" />
          <PageIcon x={1} y={12} w={13} h={11} />
        </svg>
      </div>
      <svg width="26" height="22" viewBox="0 0 26 22" className="ml-[2px]">
        <PageIcon x={1} y={1} w={11} h={20} />
        <PageIcon x={14} y={1} w={11} h={20} />
      </svg>
      <svg width="24" height="24" viewBox="0 0 24 24" className="ml-[3px]">
        <rect x="1.500" y="0.500" width="9" height="10" fill="#fff" stroke="#666" />
        <rect x="13.500" y="0.500" width="9" height="10" fill="#fff" stroke="#666" />
        <PageIcon x={1} y={13} w={10} h={10} />
        <PageIcon x={13} y={13} w={10} h={10} />
      </svg>
      <Combo text="236.98%" className="ml-[7px] h-[24px] w-[80px]" />
      <span className="ml-[6px] h-[24px] w-px bg-[#d0d0d0]" />
      <span className="ml-[5px]">{Ic.minus}</span>
      <div className="relative ml-[6px] h-px w-[100px] bg-[#777]">
        <span className="absolute left-[53px] top-[-12px] h-[24px] w-[7px] rounded-[2px] border border-[#777] bg-white" />
      </div>
      <span className="ml-[3px]">{Ic.plus}</span>
    </div>
  </div>
);

export default function App() {
  return (
    <div className="relative h-screen w-full overflow-hidden bg-[#ececec] font-['Noto_Sans_CJK_SC',sans-serif] text-[12px] text-[#1c1c1c]">
      <header className="flex h-[34px] items-center bg-[#22262f] pl-[5px] pr-[6px] text-[12.5px] text-[#e4e4e4]">
        <span className="flex h-6 w-6 items-center justify-center rounded-[3px] bg-gradient-to-br from-[#35c0f4] to-[#1a8fe0] text-[20px] font-bold italic leading-none text-white">
          P
        </span>
        <span className="ml-2 whitespace-nowrap text-[14px]">盼望着迅捷PDF编辑器</span>
        <div className="ml-auto flex items-center">
          <span className="flex h-[21px] w-[59px] items-center justify-center rounded-[2px] bg-gradient-to-b from-[#fbd45c] to-[#f3b62c] text-[12px] text-[#a67a24]">
            购买VIP
          </span>
          <MessageSquare size={15} strokeWidth={1.4} className="ml-[19px]" />
          <span className="ml-[8px] whitespace-nowrap">客服入口</span>
          <User size={16} strokeWidth={1.4} className="ml-[14px]" />
          <span className="ml-[6px] whitespace-nowrap">注册/登录</span>
          <span className="ml-[24px] flex h-[12px] w-[13px] flex-col justify-between">
            <span className="h-px bg-[#e4e4e4]" />
            <span className="h-px bg-[#e4e4e4]" />
            <span className="h-px bg-[#e4e4e4]" />
          </span>
          <span className="ml-[7px] whitespace-nowrap">菜单</span>
          <span className="ml-[31px] h-px w-[14px] bg-[#e4e4e4]" />
          <svg width="15" height="15" viewBox="0 0 15 15" className="ml-[15px]">
            <rect x="0.500" y="2.500" width="12" height="12" rx="2" fill="none" stroke="#e4e4e4" />
            <path d="M3 .5h9a2.500 2.500 0 0 1 2.500 2.500v9" fill="none" stroke="#e4e4e4" />
          </svg>
          <X size={17} strokeWidth={1.2} className="ml-[13px]" />
        </div>
      </header>

      <div className="ml-[6px] bg-[#f6f6f6]">
        <MenuBar />
        <Ribbon />
        <PropBar />
      </div>

      <TabBar />

      <div className="ml-[5px] mr-[4px] flex h-[825px] flex-col border-x-2 border-b-2 border-t-4 border-[#fde7a5]">
        <div className="flex min-h-0 flex-1 border-t-2 border-[#666]">
          <div className="w-[3px] shrink-0 bg-[#5e5e5e]" />
          <Page />
          <div className="w-[6px] shrink-0 bg-gradient-to-r from-[#555] to-[#777]" />
          <Scroller />
        </div>
        <StatusBar />
      </div>

      <div className="absolute right-0 top-[855px] flex h-[58px] w-[10px] items-center justify-center rounded-l-[3px] bg-[#3e4552]">
        <span className="h-[44px] w-[4px] bg-gradient-to-b from-[#888] via-[#d8c85a] to-[#6cc8b0]" />
      </div>

      <BlendMenu />
      <Arrows />
      <Badge n={1} className="left-[104px] top-[241px]" />
      <Badge n={2} className="left-[91px] top-[336px]" />
      <Badge n={3} className="left-[391px] top-[672px]" />
      <ImeBar />
      <VipPopup />
      <ActivationMark />
      <SiteMark />

      <div className="absolute right-[5px] top-[37px] flex flex-col gap-[25px]">
        <ScrollUp />
        <ScrollUp />
      </div>
      <div className="absolute right-[5px] top-[155px] flex flex-col gap-[13px]">
        <ScrollUp />
        <ScrollUp />
      </div>
    </div>
  );
}
